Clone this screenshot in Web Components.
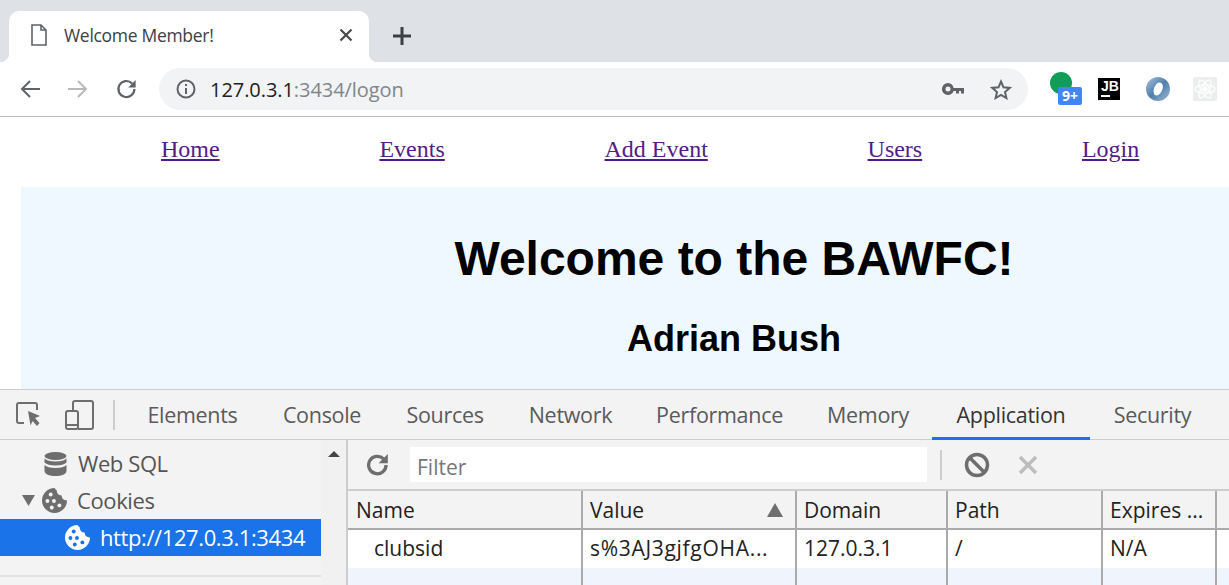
<!DOCTYPE html>
<html>
<head>
<meta charset="utf-8">
<title>Welcome Member!</title>
<style>
  html, body { margin: 0; height: 585px; overflow: hidden; background: #fff; }
  body { display: flex; flex-direction: column; font-family: "Open Sans", sans-serif; }
</style>
</head>
<body>
<tab-strip title-text="Welcome Member!"></tab-strip>
<nav-toolbar host-text="127.0.3.1" rest-text=":3434/logon"></nav-toolbar>
<site-page></site-page>
<dev-tools></dev-tools>

<script>
class TabStrip extends HTMLElement {
  constructor() {
    super();
    this.attachShadow({ mode: 'open' });
    const title = this.getAttribute('title-text') || '';
    this.shadowRoot.innerHTML = `
      <style>
        :host { display: flex; height: 62px; flex: none; background: #dee1e6; padding: 11px 0 0 9px; box-sizing: border-box; align-items: stretch; }
        .tab { position: relative; width: 360px; background: #fff; border-radius: 10px 10px 0 0; display: flex; align-items: center; padding: 0 16px 3px 22px; box-sizing: border-box; }
        .tab::before, .tab::after { content: ""; position: absolute; bottom: 0; width: 9px; height: 9px; }
        .tab::before { left: -9px; background: radial-gradient(circle at 0 0, #dee1e6 9px, #fff 9.5px); }
        .tab::after { right: -9px; background: radial-gradient(circle at 100% 0, #dee1e6 9px, #fff 9.5px); }
        .title { flex: 1; margin-left: 17px; font: 17.5px "Open Sans", sans-serif; color: #3c4043; letter-spacing: -0.3px; }
        svg { display: block; flex: none; }
        .plus { margin: 16px 0 0 24px; }
      </style>
      <div class="tab">
        <svg width="16" height="22" viewBox="0 0 16 22" fill="#fff" stroke="#5f6368" stroke-width="1.6"><path d="M1 1h9l5 5v15H1z"/><path d="M10 1v5h5" fill="none"/></svg>
        <span class="title">${title}</span>
        <svg width="14" height="14" viewBox="0 0 14 14" stroke="#46494d" stroke-width="2.2"><path d="M1.5 1.5l11 11M12.5 1.5l-11 11"/></svg>
      </div>
      <svg class="plus" width="18" height="18" viewBox="0 0 18 18" stroke="#3c4043" stroke-width="3"><path d="M9 0v18M0 9h18"/></svg>
    `;
  }
}

class NavToolbar extends HTMLElement {
  constructor() {
    super();
    this.attachShadow({ mode: 'open' });
    const hostText = this.getAttribute('host-text') || '';
    const restText = this.getAttribute('rest-text') || '';
    this.shadowRoot.innerHTML = `
      <style>
        :host { display: flex; height: 55px; flex: none; box-sizing: border-box; background: #fff; border-bottom: 1px solid #b9b9b9; align-items: flex-start; }
        svg { display: block; flex: none; }
        .btns { display: flex; align-items: center; gap: 28px; height: 54px; padding-left: 20px; width: 159px; box-sizing: border-box; flex: none; }
        .omni { margin-top: 6px; width: 869px; height: 42px; flex: none; border-radius: 21px; background: #f1f3f4; display: flex; align-items: center; box-sizing: border-box; padding: 0 16px 0 17px; }
        .url { flex: 1; margin-left: 14px; font: 20px "Open Sans", sans-serif; color: #202124; letter-spacing: -0.06px; }
        .url span { color: #80868b; }
        .exts { display: flex; align-items: center; margin-left: 22px; position: relative; height: 54px; }
        .ext-green { position: relative; width: 48px; height: 34px; }
        .dot { position: absolute; left: 0; top: 0; width: 22px; height: 22px; border-radius: 50%; background: #0f9d58; }
        .badge { position: absolute; left: 8px; top: 15px; width: 24px; height: 18px; border-radius: 2px; background: #4285f4; color: #fff; font: bold 14px/18px "Open Sans", sans-serif; text-align: center; }
        .jb { width: 22px; height: 22px; background: #000; color: #fff; font: bold 14px/13px "Liberation Sans", sans-serif; box-sizing: border-box; padding: 2px 0 0 3px; position: relative; margin-right: 25px; }
        .jb i { position: absolute; left: 3px; bottom: 3px; width: 9px; height: 2px; background: #fff; }
      </style>
      <div class="btns">
        <svg width="20" height="20" viewBox="0 0 20 20" fill="none" stroke="#5f6368" stroke-width="2"><path d="M20 10H2M10 2l-8 8 8 8"/></svg>
        <svg width="20" height="20" viewBox="0 0 20 20" fill="none" stroke="#b7b9bb" stroke-width="2"><path d="M0 10h18M10 2l8 8-8 8"/></svg>
        <svg width="22" height="22" viewBox="0 0 22 22" fill="none"><path d="M18.400 11a8 8 0 1 1-2.300-5.600" stroke="#5f6368" stroke-width="2.200"/><path d="M19.600 2v7.400h-7.400z" fill="#5f6368"/></svg>
      </div>
      <div class="omni">
        <svg width="20" height="20" viewBox="0 0 20 20" fill="none" stroke="#5f6368" stroke-width="2"><circle cx="10" cy="10" r="8.500"/><path d="M10 9v6M10 5v2"/></svg>
        <span class="url">${hostText}<span>${restText}</span></span>
        <svg width="22" height="12" viewBox="0 0 22 12" fill="#5f6368"><path d="M6 0a6 6 0 1 0 5.600 8H14v2.500h3V8h2v2.500h3V5H11.600A6 6 0 0 0 6 0zm0 3.500a2.500 2.500 0 1 1 0 5 2.500 2.500 0 0 1 0-5z" fill-rule="evenodd"/></svg>
        <svg style="margin-left:26px" width="22" height="21" viewBox="0 0 22 21" fill="none" stroke="#5f6368" stroke-width="2" stroke-linejoin="miter"><path d="M11 2.500l2.500 5.800 6.200.6-4.700 4.100 1.400 6.100L11 16l-5.400 3.100L7 13 2.300 8.900l6.200-.6z"/></svg>
      </div>
      <div class="exts">
        <div class="ext-green"><div class="dot"></div><div class="badge">9+</div></div>
        <div class="jb">JB<i></i></div>
        <svg width="26" height="26" viewBox="0 0 26 26"><defs><linearGradient id="r" x1="0" y1="0" x2="1" y2="1"><stop offset="0" stop-color="#a9c4de"/><stop offset=".5" stop-color="#4f7fae"/><stop offset="1" stop-color="#9fb9d4"/></linearGradient></defs><path fill-rule="evenodd" fill="url(#r)" d="M13 1a12 12 0 1 0 0 24 12 12 0 0 0 0-24zm1.500 5.500c3 0 4 3 3 6.500s-3.500 6.500-6 6.500-3.500-3-2.600-6.500S12 6.500 14.500 6.500z"/></svg>
        <svg style="margin-left:22px" width="24" height="24" viewBox="0 0 24 24" fill="none" stroke="#fff" stroke-width="1.200"><rect width="24" height="24" rx="2" fill="#eceded" stroke="none"/><ellipse cx="12" cy="12" rx="10" ry="4"/><ellipse cx="12" cy="12" rx="10" ry="4" transform="rotate(60 12 12)"/><ellipse cx="12" cy="12" rx="10" ry="4" transform="rotate(120 12 12)"/><circle cx="12" cy="12" r="2" fill="#fff"/></svg>
      </div>
    `;
  }
}

class SitePage extends HTMLElement {
  constructor() {
    super();
    this.attachShadow({ mode: 'open' });
    const links = ['Home', 'Events', 'Add Event', 'Users', 'Login'];
    this.shadowRoot.innerHTML = `
      <style>
        :host { display: block; height: 272px; flex: none; overflow: hidden; background: #fff; font-family: "Liberation Serif", serif; }
        nav { display: flex; gap: 159.75px; padding: 18px 0 0 161px; height: 70px; box-sizing: border-box; white-space: nowrap; }
        a { color: #551a8b; font-size: 24px; line-height: 28px; text-decoration: underline; }
        .panel { margin-left: 21px; width: 1426px; height: 220px; background: #f0f8ff; text-align: center; font-family: "Liberation Sans", sans-serif; color: #000; overflow: hidden; }
        h1 { margin: 41px 0 0; font-size: 48px; line-height: 62px; font-weight: bold; }
        h2 { margin: 28px 0 0; font-size: 36px; line-height: 42px; font-weight: bold; }
      </style>
      <nav>${links.map(l => `<a href="#">${l}</a>`).join('')}</nav>
      <section class="panel">
        <h1>Welcome to the BAWFC!</h1>
        <h2>Adrian Bush</h2>
      </section>
    `;
  }
}

class DevTools extends HTMLElement {
  constructor() {
    super();
    this.attachShadow({ mode: 'open' });
    this.shadowRoot.innerHTML = `
      <style>
        :host { display: flex; flex-direction: column; flex: 1; min-height: 0; overflow: hidden; background: #f3f3f3; }
        .main { display: flex; flex: 1; min-height: 0; }
      </style>
      <dt-tabs></dt-tabs>
      <div class="main">
        <dt-sidebar></dt-sidebar>
        <dt-cookies></dt-cookies>
      </div>
    `;
  }
}

class DtTabs extends HTMLElement {
  constructor() {
    super();
    this.attachShadow({ mode: 'open' });
    const tabs = [['Elements', 135], ['Console', 124], ['Sources', 122], ['Network', 129], ['Performance', 169], ['Memory', 128], ['Application', 158], ['Security', 125]];
    this.shadowRoot.innerHTML = `
      <style>
        :host { display: flex; height: 51px; flex: none; box-sizing: border-box; border-top: 1px solid #cdcdcd; border-bottom: 1px solid #cdcdcd; align-items: stretch; }
        svg { display: block; flex: none; }
        .tools { display: flex; align-items: center; width: 125px; padding-left: 16px; box-sizing: border-box; }
        .sep { width: 2px; height: 30px; background: #cdcdcd; margin-left: 19px; }
        .tab { box-sizing: border-box; text-align: center; font: 21.5px/49px "Open Sans", sans-serif; letter-spacing: -0.3px; color: #5a5a5a; white-space: nowrap; height: 50px; }
        .tab.on { color: #333; border-bottom: 3px solid #1a73e8; }
      </style>
      <div class="tools">
        <svg width="26" height="26" viewBox="0 0 26 26" fill="none"><path d="M8 21H3a2 2 0 0 1-2-2V3a2 2 0 0 1 2-2h16a2 2 0 0 1 2 2v5" stroke="#6e6e6e" stroke-width="2"/><path d="M12 9l12 5-5 2 4.500 5-2.500 3-4.500-5-2 4.500z" fill="#6e6e6e"/></svg>
        <svg style="margin-left:23px" width="29" height="30" viewBox="0 0 29 30" fill="none" stroke="#6e6e6e" stroke-width="2"><path d="M8 10V3a2 2 0 0 1 2-2h16a2 2 0 0 1 2 2v24a2 2 0 0 1-2 2H13"/><rect x="1" y="11" width="12" height="18" rx="2"/><path d="M1 25h12"/></svg>
        <div class="sep"></div>
      </div>
      ${tabs.map(([t, w]) => `<div class="tab${t === 'Application' ? ' on' : ''}" style="width:${w}px">${t}</div>`).join('')}
    `;
  }
}

const cookiePath = 'M11.500 0a11.500 11.500 0 1 0 11.500 11.500 5 5 0 0 1-5-4.500 5 5 0 0 1-4.500-5A5 5 0 0 1 11.500 0z';

class DtSidebar extends HTMLElement {
  constructor() {
    super();
    this.attachShadow({ mode: 'open' });
    this.shadowRoot.innerHTML = `
      <style>
        :host { display: flex; width: 348px; flex: none; box-sizing: border-box; border-right: 2px solid #cdcdcd; }
        svg { display: block; flex: none; }
        .tree { width: 321px; padding-top: 5px; font: 22px "Open Sans", sans-serif; letter-spacing: -0.4px; color: #555; }
        .row { display: flex; align-items: center; height: 37px; }
        .row span { margin-top: -2px; }
        .sel { background: #1a73e8; color: #fff; }
        .rule { height: 2px; background: #e2e2e2; margin-top: 19px; }
        .bar { flex: 1; display: flex; justify-content: center; padding-top: 11px; background: #f1f1f1; }
      </style>
      <div class="tree">
        <div class="row" style="padding-left:44px">
          <svg width="23" height="24" viewBox="0 0 23 24" fill="#6e6e6e"><ellipse cx="11.500" cy="4" rx="11" ry="4"/><path d="M.5 6.500c2 2 5.500 3 11 3s9-1 11-3v4c-2 2-5.500 3-11 3s-9-1-11-3zM.5 13c2 2 5.500 3 11 3s9-1 11-3v6c0 3-5 5-11 5s-11-2-11-5z"/></svg>
          <span style="margin-left:11px">Web SQL</span>
        </div>
        <div class="row" style="padding-left:22px">
          <svg width="13" height="11" viewBox="0 0 13 11" fill="#6e6e6e"><path d="M0 0h13L6.500 11z"/></svg>
          <svg style="margin-left:7px" width="25" height="25" viewBox="0 0 23 23"><path d="${cookiePath}" fill="#6e6e6e"/><g fill="#f3f3f3"><circle cx="8" cy="6" r="1.800"/><circle cx="5" cy="12" r="1.800"/><circle cx="11" cy="12" r="1.800"/><circle cx="9" cy="18" r="1.800"/><circle cx="16" cy="16" r="1.800"/></g></svg>
          <span style="margin-left:10px">Cookies</span>
        </div>
        <div class="row sel" style="padding-left:65px">
          <svg width="25" height="25" viewBox="0 0 23 23"><path d="${cookiePath}" fill="#fff"/><g fill="#1a73e8"><circle cx="8" cy="6" r="1.800"/><circle cx="5" cy="12" r="1.800"/><circle cx="11" cy="12" r="1.800"/><circle cx="9" cy="18" r="1.800"/><circle cx="16" cy="16" r="1.800"/></g></svg>
          <span style="margin-left:10px">http://127.0.3.1:3434</span>
        </div>
        <div class="rule"></div>
      </div>
      <div class="bar"><svg width="12" height="6" viewBox="0 0 12 6" fill="#444"><path d="M6 0l6 6H0z"/></svg></div>
    `;
  }
}

class DtCookies extends HTMLElement {
  constructor() {
    super();
    this.attachShadow({ mode: 'open' });
    const heads = ['Name', 'Value', 'Domain', 'Path', 'Expires ...', ''];
    const cells = ['clubsid', 's%3AJ3gjfgOHA...', '127.0.3.1', '/', 'N/A', ''];
    this.shadowRoot.innerHTML = `
      <style>
        :host { display: flex; flex-direction: column; flex: 1; min-width: 0; font: 21px "Open Sans", sans-serif; letter-spacing: 0; color: #222; }
        svg { display: block; flex: none; }
        .bar { display: flex; align-items: center; height: 51px; flex: none; box-sizing: border-box; padding: 0 0 0 18px; border-bottom: 2px solid #cdcdcd; }
        .filter { margin-left: 20px; width: 517px; height: 35px; box-sizing: border-box; background: #fff; padding-left: 7px; font-size: 21px; line-height: 41px; color: #777; overflow: hidden; }
        .sep { width: 2px; height: 30px; background: #cdcdcd; margin: 0 22px 0 13px; }
        .grid { display: grid; grid-template-columns: 235px 214px 151px 155px 114px 1fr; grid-template-rows: 39px 38px 1fr; flex: 1; min-height: 0; overflow: hidden; }
        .c { box-sizing: border-box; border-right: 2px solid #aaa; padding-left: 7px; white-space: nowrap; overflow: hidden; position: relative; }
        .h { background: #f3f3f3; border-bottom: 2px solid #aaa; line-height: 39px; }
        .h:first-child { padding-left: 8px; }
        .d { background: #fff; line-height: 37px; }
        .e { background: #f0f5fd; }
        .c:nth-child(6n) { border-right: 0; }
        .arrow { position: absolute; right: 12px; top: 12px; }
      </style>
      <div class="bar">
        <svg width="24" height="24" viewBox="0 0 22 22" fill="none"><path d="M18.400 11a8 8 0 1 1-2.300-5.600" stroke="#6e6e6e" stroke-width="3"/><path d="M20 1v8.500h-8.500z" fill="#6e6e6e"/></svg>
        <div class="filter">Filter</div>
        <div class="sep"></div>
        <svg width="26" height="26" viewBox="0 0 26 26" fill="none" stroke="#6e6e6e" stroke-width="3.500"><circle cx="13" cy="13" r="10.500"/><path d="M5.500 5.500l15 15"/></svg>
        <svg style="margin-left:28px" width="20" height="20" viewBox="0 0 20 20" stroke="#bdbdbd" stroke-width="3.500"><path d="M2 2l16 16M18 2L2 18"/></svg>
      </div>
      <div class="grid">
        ${heads.map((h, i) => `<div class="c h">${h}${i === 1 ? '<svg class="arrow" width="16" height="14" viewBox="0 0 16 14" fill="#6e6e6e"><path d="M8 0l8 14H0z"/></svg>' : ''}</div>`).join('')}
        ${cells.map((c, i) => `<div class="c d" style="${i === 0 ? 'padding-left:26px' : i === 1 ? 'letter-spacing:.7px' : ''}">${c}</div>`).join('')}
        ${cells.map(() => '<div class="c e"></div>').join('')}
      </div>
    `;
  }
}

customElements.define('tab-strip', TabStrip);
customElements.define('nav-toolbar', NavToolbar);
customElements.define('site-page', SitePage);
customElements.define('dev-tools', DevTools);
customElements.define('dt-tabs', DtTabs);
customElements.define('dt-sidebar', DtSidebar);
customElements.define('dt-cookies', DtCookies);
</script>
</body>
</html>
